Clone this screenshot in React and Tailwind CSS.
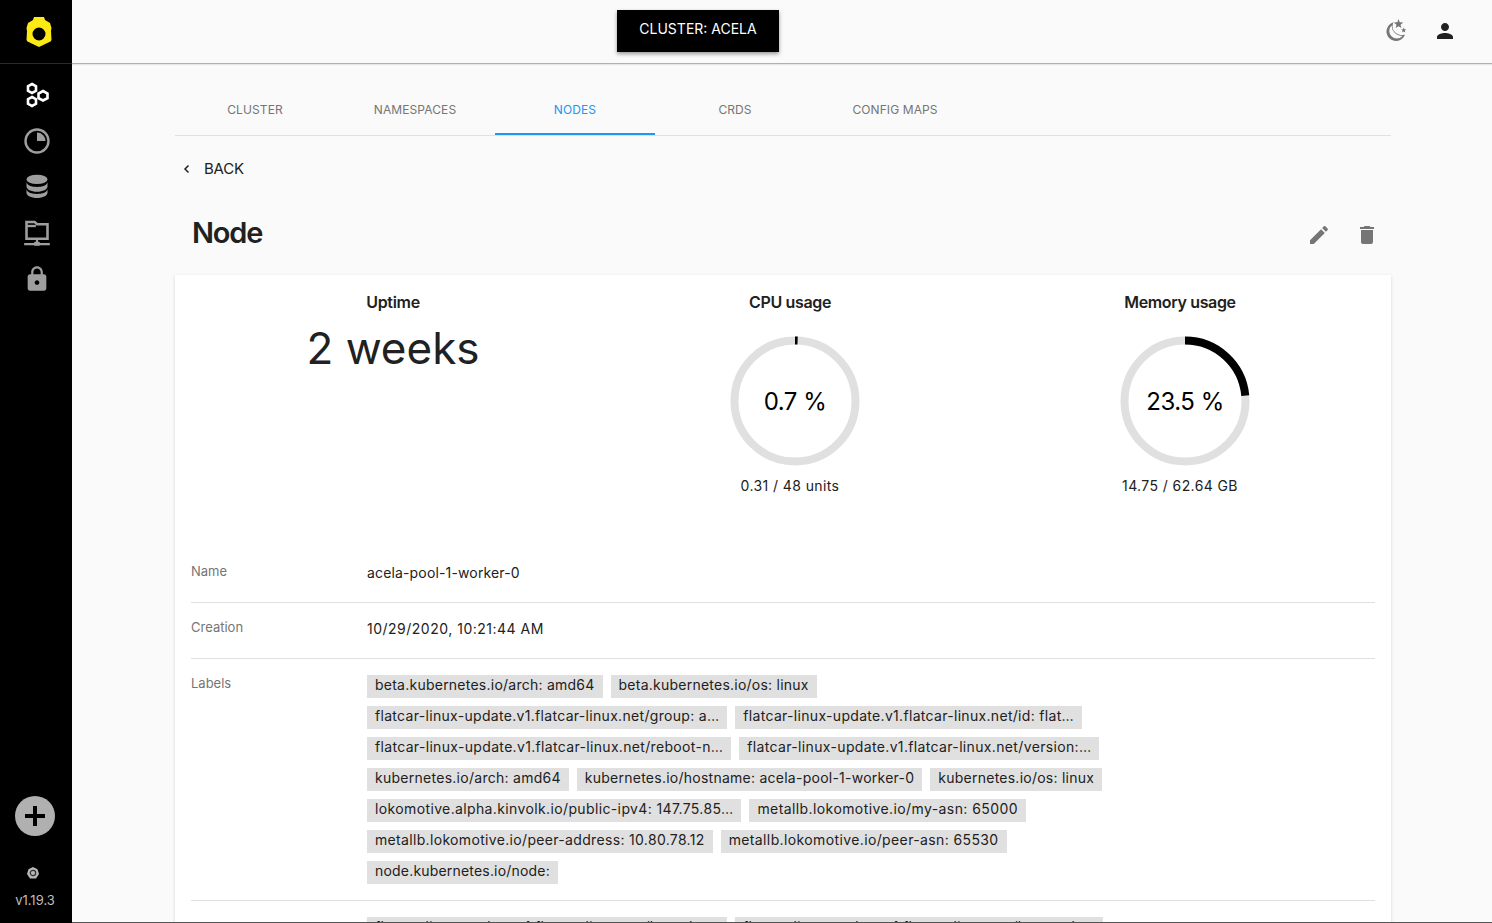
import React from 'react';

const tags = [
  [['beta.kubernetes.io/arch: amd64', 'tracking-[0.24px]'], ['beta.kubernetes.io/os: linux', 'tracking-[0.24px]']],
  [['flatcar-linux-update.v1.flatcar-linux.net/group: a…', 'tracking-[0.31px]'], ['flatcar-linux-update.v1.flatcar-linux.net/id: flat…', 'tracking-[0.31px]']],
  [['flatcar-linux-update.v1.flatcar-linux.net/reboot-n…', 'tracking-[0.33px]'], ['flatcar-linux-update.v1.flatcar-linux.net/version:…', 'tracking-[0.35px]']],
  [['kubernetes.io/arch: amd64', 'tracking-[0.27px]'], ['kubernetes.io/hostname: acela-pool-1-worker-0', 'tracking-[0.25px]'], ['kubernetes.io/os: linux', 'tracking-[0.24px]']],
  [['lokomotive.alpha.kinvolk.io/public-ipv4: 147.75.85…', 'tracking-[0.37px]'], ['metallb.lokomotive.io/my-asn: 65000', 'tracking-[0.41px]']],
  [['metallb.lokomotive.io/peer-address: 10.80.78.12', 'tracking-[0.33px]'], ['metallb.lokomotive.io/peer-asn: 65530', 'tracking-[0.38px]']],
  [['node.kubernetes.io/node:', 'tracking-[0.19px]']],
];

function Ring({ pct, label }) {
  const r = 60.5;
  const c = 2 * Math.PI * r;
  return (
    <div className="relative w-[130px] h-[130px]">
      <svg width="130" height="130" viewBox="0 0 130 130" className="-rotate-90">
        <circle cx="65" cy="65" r={r} fill="none" stroke="#e0e0e0" strokeWidth="8" />
        <circle cx="65" cy="65" r={r} fill="none" stroke="#000" strokeWidth="8" strokeDasharray={`${c * pct} ${c}`} />
      </svg>
      <div className="absolute inset-0 pt-[2px] flex items-center justify-center text-[24px] tracking-[-0.5px] text-black">{label}</div>
    </div>
  );
}

function Row({ label, children, box, valueClass }) {
  return (
    <div className={`flex border-b border-[#e0e0e0] ${box}`}>
      <div className="w-[176px] shrink-0 text-[13px] leading-[20px] text-[#757575]">{label}</div>
      <div className={`text-[14px] leading-[24px] text-[#212121] ${valueClass}`}>{children}</div>
    </div>
  );
}

export default function App() {
  return (
    <div className="flex h-[923px] w-[1492px] overflow-hidden bg-[#fafafa] font-['Inter',sans-serif] text-[#212121]">
      <aside className="w-[72px] shrink-0 bg-black flex flex-col items-center relative">
        <div className="h-[64px] w-full shrink-0 border-b border-[#2a2a2a] flex items-center justify-center">
          <svg width="26" height="30" viewBox="0 0 26 30" className="ml-[6px]">
            <path fillRule="evenodd" fill="#fdea14" d="M8 0h10l1 3 5 3 1.500 5-.5 3 .5 9-1 1.500L13 30 1.500 24.500l-1-1.500 .5-9-.5-3L2 6l5-3z M13 10.500a6.500 6.500 0 1 0 0 13 6.500 6.500 0 0 0 0-13z" />
          </svg>
        </div>
        <nav className="flex flex-col items-center mt-[17px] gap-[18px] ml-[2px]">
          <svg width="28" height="28" viewBox="0 0 28 28" fill="none" stroke="#fff" strokeWidth="2.600">
            <path d="M9 3l4 2.200v4.600L9 12 5 9.800V5.200z" />
            <path d="M20 10l4.500 2.500v4.600L20 19.500l-4.500-2.400v-4.600z" />
            <path d="M9 16l4 2.200v4.600L9 25l-4-2.200v-4.600z" />
          </svg>
          <svg width="28" height="28" viewBox="0 0 28 28">
            <circle cx="14" cy="14" r="11.500" fill="none" stroke="#9e9e9e" strokeWidth="2.400" />
            <path d="M14 5.500A8.500 8.500 0 0 1 22.500 14H14z" fill="#9e9e9e" />
          </svg>
          <svg width="28" height="28" viewBox="0 0 24 24" fill="#9e9e9e">
            <ellipse cx="12" cy="5.500" rx="9" ry="4" />
            <path d="M3 8c1 3 4.500 4 9 4s8-1 9-4v3.500c0 2.500-4 4.500-9 4.500s-9-2-9-4.500z" />
            <path d="M3 14c1 3 4.500 4 9 4s8-1 9-4v3c0 2.500-4 4.500-9 4.500s-9-2-9-4.500z" />
          </svg>
          <svg width="28" height="28" viewBox="0 0 24 24" fill="none" stroke="#9e9e9e">
            <path d="M3 2.500h7l2 2h9v12.500H3z" strokeWidth="2.200" />
            <path d="M3 5h8v2H3z" fill="#9e9e9e" stroke="none" />
            <path d="M1 21.500h22M12 17v4" strokeWidth="1.800" />
            <rect x="9.500" y="19.500" width="5" height="3.500" rx="1" fill="#9e9e9e" stroke="none" />
          </svg>
          <svg width="28" height="28" viewBox="0 0 24 24" fill="#9e9e9e">
            <path d="M18 8h-1V6c0-2.760-2.240-5-5-5S7 3.240 7 6v2H6c-1.100 0-2 .9-2 2v10c0 1.100.9 2 2 2h12c1.100 0 2-.9 2-2V10c0-1.100-.9-2-2-2zm-6 9c-1.100 0-2-.9-2-2s.9-2 2-2 2 .9 2 2-.9 2-2 2zm3.100-9H8.900V6c0-1.710 1.390-3.100 3.100-3.100 1.710 0 3.100 1.390 3.100 3.100v2z" />
          </svg>
        </nav>
        <div className="flex-1" />
        <div className="mr-[2px] w-10 h-10 rounded-full bg-[#b0b0b0] flex items-center justify-center mb-[31px]">
          <svg width="24" height="24" viewBox="0 0 24 24" fill="#000"><path d="M2 10h8V2h4v8h8v4h-8v8h-4v-8H2z" /></svg>
        </div>
        <svg width="12" height="12" viewBox="0 0 12 12" className="mr-[6px] mb-[13px]">
          <path fill="#b8b8b8" d="M6 0l4.500 2.200L12 7l-3 4.500H3L0 7l1.500-4.800z" />
          <circle cx="6" cy="6" r="2.700" fill="none" stroke="#333" strokeWidth="1.200" />
        </svg>
        <div className="text-[13px] leading-[16px] text-[#bdbdbd] mr-[2px] mb-[15px]">v1.19.3</div>
      </aside>

      <div className="flex-1 min-w-0 flex flex-col">
        <header className="h-[64px] shrink-0 border-b border-[#b0b0b0] shadow-[0_1px_1px_rgba(0,0,0,0.08)] flex items-start relative">
          <div className="absolute left-[545px] top-[10px] w-[162px] h-[42px] pb-[5px] bg-black text-white text-[14px] flex items-center justify-center shadow-[0_2px_4px_rgba(0,0,0,0.4)]">CLUSTER: ACELA</div>
          <div className="ml-auto flex items-center h-[62px] gap-[24px] pr-[35px]">
            <svg width="24" height="24" viewBox="0 0 24 24">
              <path fill="#757575" d="M8.500 3.300A9.500 9.500 0 1 0 20 15.500 A9 9 0 0 1 8.500 3.300z M6.500 6.500A11.500 11.500 0 0 0 17.300 17.300 A7.300 7.300 0 0 1 6.500 6.500z" fillRule="evenodd" />
              <path fill="#757575" d="M13.500 0l1.200 3.300 3.500.2-2.700 2.200.9 3.400-2.900-1.900-2.900 1.900.9-3.400-2.700-2.200 3.500-.2zM18.700 8.500l.7 1.800 1.900.1-1.500 1.200.5 1.900-1.600-1-1.600 1 .5-1.900-1.500-1.200 1.900-.1z" />
            </svg>
            <svg width="24" height="24" viewBox="0 0 24 24" fill="#212121"><path d="M12 12c2.210 0 4-1.790 4-4s-1.790-4-4-4-4 1.790-4 4 1.790 4 4 4zm0 2c-2.670 0-8 1.340-8 4v2h16v-2c0-2.660-5.330-4-8-4z" /></svg>
          </div>
        </header>

        <main className="flex-1 min-h-0 overflow-hidden px-[103px] border-b border-[#555]">
          <div className="w-[1216px]">
            <div className="h-[72px] flex border-b border-[#e0e0e0] items-stretch">
              {['CLUSTER', 'NAMESPACES', 'NODES', 'CRDS', 'CONFIG MAPS'].map((t, i) => (
                <div key={t} className={`w-[160px] flex items-center justify-center pt-[23px] text-[12px] tracking-[0.1px] border-b-2 ${i === 2 ? 'text-[#2196f3] border-[#2196f3]' : 'text-[#757575] border-transparent'}`}>{t}</div>
              ))}
            </div>
            <div className="flex items-center h-[24px] mt-[21px] text-[15px] tracking-[-0.2px] text-[#212121]">
              <svg width="12" height="12" viewBox="0 0 24 24" fill="none" stroke="#212121" strokeWidth="3" className="ml-[6px]"><path d="M15 5l-7 7 7 7" /></svg>
              <span className="ml-[11px]">BACK</span>
            </div>
            <div className="flex items-center justify-between mt-[26px] h-[52px] pl-[17px] pr-[12px]">
              <h1 className="text-[29px] leading-[36px] font-semibold tracking-[-1.2px]">Node</h1>
              <div className="flex items-center gap-[24px] mt-[4px]">
                <svg width="24" height="24" viewBox="0 0 24 24" fill="#757575"><path d="M3 17.250V21h3.750L17.810 9.940l-3.750-3.750L3 17.250zM20.710 7.040c.39-.39.39-1.020 0-1.410l-2.340-2.340c-.39-.39-1.020-.39-1.410 0l-1.830 1.830 3.750 3.750 1.830-1.830z" /></svg>
                <svg width="24" height="24" viewBox="0 0 24 24" fill="#757575"><path d="M6 19c0 1.100.9 2 2 2h8c1.100 0 2-.9 2-2V7H6v12zM19 4h-3.500l-1-1h-5l-1 1H5v2h14V4z" /></svg>
              </div>
            </div>
            <section className="mt-[16px] bg-white shadow-[0_1px_3px_rgba(0,0,0,0.15)] px-[16px]">
              <div className="flex h-[254px] pt-[15px]">
                <div className="w-[404px] flex flex-col items-center">
                  <div className="text-[16px] leading-[24px] font-semibold tracking-[-0.3px]">Uptime</div>
                  <div className="text-[44px] leading-[52px] mt-[8px]">2 weeks</div>
                </div>
                <div className="w-[390px] flex flex-col items-center">
                  <div className="text-[16px] leading-[24px] font-semibold tracking-[-0.35px]">CPU usage</div>
                  <div className="mt-[22px] ml-[10px]"><Ring pct={0.007} label="0.7 %" /></div>
                  <div className="text-[14px] leading-[20px] mt-[10px] tracking-[0.4px]">0.31 / 48 units</div>
                </div>
                <div className="w-[390px] flex flex-col items-center">
                  <div className="text-[16px] leading-[24px] font-semibold tracking-[-0.35px]">Memory usage</div>
                  <div className="mt-[22px] ml-[10px]"><Ring pct={0.235} label="23.5 %" /></div>
                  <div className="text-[14px] leading-[20px] mt-[10px] tracking-[0.4px]">14.75 / 62.64 GB</div>
                </div>
              </div>
              <div className="mt-[27px]">
                <Row label="Name" box="h-[47px] pt-[5px]" valueClass="tracking-[0.15px]">acela-pool-1-worker-0</Row>
                <Row label="Creation" box="h-[56px] pt-[14px]" valueClass="tracking-[0.5px]">10/29/2020, 10:21:44 AM</Row>
                <div className="flex border-b border-[#e0e0e0] h-[242px] pt-[16px]">
                  <div className="w-[176px] shrink-0 text-[13px] leading-[20px] text-[#757575] -mt-[2px]">Labels</div>
                  <div className="flex flex-col gap-[8px]">
                    {tags.map((row, i) => (
                      <div key={i} className="flex gap-[8px]">
                        {row.map(([t, tr]) => (
                          <span key={t} className={`h-[23px] px-[8px] bg-[#e0e0e0] text-[14px] leading-[20px] text-[#212121] whitespace-nowrap ${tr}`}>{t}</span>
                        ))}
                      </div>
                    ))}
                  </div>
                </div>
                <div className="flex pt-[16px] pl-[176px] gap-[8px]">
                  <span className="h-[23px] w-[360px] overflow-hidden px-[8px] bg-[#e0e0e0] text-[14px] tracking-[0.31px] leading-[20px] whitespace-nowrap">flatcar-linux-update.v1.flatcar-linux.net/last-che…</span>
                  <span className="h-[23px] w-[368px] overflow-hidden px-[8px] bg-[#e0e0e0] text-[14px] tracking-[0.31px] leading-[20px] whitespace-nowrap">flatcar-linux-update.v1.flatcar-linux.net/last-upd…</span>
                </div>
              </div>
            </section>
          </div>
        </main>
      </div>
    </div>
  );
}
